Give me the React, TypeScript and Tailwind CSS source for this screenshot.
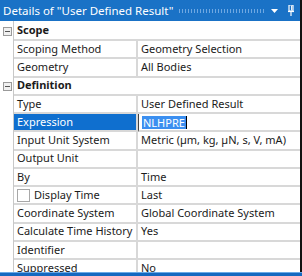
import React from 'react';

type Row =
  | { kind: 'section'; label: string }
  | { kind: 'prop'; label: string; value?: string; selected?: boolean; check?: boolean; editing?: boolean };

const rows: Row[] = [
  { kind: 'section', label: 'Scope' },
  { kind: 'prop', label: 'Scoping Method', value: 'Geometry Selection' },
  { kind: 'prop', label: 'Geometry', value: 'All Bodies' },
  { kind: 'section', label: 'Definition' },
  { kind: 'prop', label: 'Type', value: 'User Defined Result' },
  { kind: 'prop', label: 'Expression', value: 'NLHPRE', selected: true, editing: true },
  { kind: 'prop', label: 'Input Unit System', value: 'Metric (µm, kg, µN, s, V, mA)' },
  { kind: 'prop', label: 'Output Unit', value: '' },
  { kind: 'prop', label: 'By', value: 'Time' },
  { kind: 'prop', label: 'Display Time', value: 'Last', check: true },
  { kind: 'prop', label: 'Coordinate System', value: 'Global Coordinate System' },
  { kind: 'prop', label: 'Calculate Time History', value: 'Yes' },
  { kind: 'prop', label: 'Identifier', value: '' },
  { kind: 'prop', label: 'Suppressed', value: 'No' },
];

function MinusBox() {
  return (
    <div className="w-[9px] h-[9px] border border-[#9a9a9a] bg-[#f0f0f0] flex items-center justify-center">
      <div className="w-[5px] h-px bg-[#555]" />
    </div>
  );
}

export default function App() {
  return (
    <div className="w-[302px] h-[276px] overflow-hidden flex flex-col bg-white font-['Noto_Sans',sans-serif] text-[11px] text-[#1b1b1b]">
      <div className="flex flex-1 min-h-0">
        <div className="flex-1 min-w-0 flex flex-col">
          {/* Title bar */}
          <div className="h-[21px] shrink-0 bg-[#1a72c6] flex items-center pl-[3px] pr-[6px] text-white text-[11.5px]">
            <span className="whitespace-nowrap">Details of "User Defined Result"</span>
            <div className="flex-1 h-[4px] ml-[5px] mr-[2px] bg-[radial-gradient(circle,#6fa8e2_0.7px,transparent_0.9px)] bg-[length:3px_2px]" />
            <svg width="7" height="4" viewBox="0 0 7 4" className="ml-[3px]">
              <path d="M0 0h7L3.5 4z" fill="#fff" />
            </svg>
            <svg width="6" height="11" viewBox="0 0 6 11" className="ml-[10px]">
              <path d="M1 0h4v6H1z" fill="none" stroke="#fff" strokeWidth="1.2" />
              <path d="M0 6.5h6" stroke="#fff" strokeWidth="1.2" />
              <path d="M3 7v4" stroke="#fff" strokeWidth="1.2" />
              <path d="M3.6 0.5v5" stroke="#fff" strokeWidth="1" />
            </svg>
          </div>

          {/* Property grid */}
          <div className="flex flex-col">
            {rows.map((r, i) =>
              r.kind === 'section' ? (
                <div key={i} className={`flex ${i === 0 ? 'h-[20px]' : 'h-[18.25px]'} shrink-0`}>
                  <div className="w-[14px] shrink-0 border-r border-[#c8c8c8] flex items-center justify-center pl-px">
                    <MinusBox />
                  </div>
                  <div className="flex-1 border-b-2 border-[#d8d8d8] flex items-center pl-[3px] font-bold">
                    {r.label}
                  </div>
                </div>
              ) : (
                <div key={i} className="flex h-[18.25px] shrink-0">
                  <div className="w-[14px] shrink-0 border-r border-[#c8c8c8]" />
                  <div
                    className={`w-[124px] shrink-0 border-b-2 border-r-2 border-[#d8d8d8] flex items-center pl-[3px] whitespace-nowrap ${
                      r.selected ? 'bg-[#0f6fcf] text-white' : ''
                    }`}
                  >
                    {r.check && (
                      <div className="w-[13px] h-[13px] border border-[#a8a8a8] bg-white mr-[4px] shrink-0" />
                    )}
                    {r.label}
                  </div>
                  <div
                    className={`flex-1 min-w-0 border-b-2 border-[#d8d8d8] flex items-center pl-[3px] whitespace-nowrap overflow-hidden ${
                      r.editing ? 'border-l border-l-[#444]' : ''
                    }`}
                  >
                    {r.editing ? (
                      <>
                        <span className="bg-[#3b8ff0] text-white px-px leading-[13px]">{r.value}</span>
                        <span className="w-px h-[13px] bg-black" />
                      </>
                    ) : (
                      r.value
                    )}
                  </div>
                </div>
              )
            )}
          </div>
        </div>
        <div className="w-[2px] shrink-0 bg-[#111]" />
      </div>
      <div className="h-[4px] shrink-0 flex flex-col">
        <div className="h-px bg-[#6aa9e6]" />
        <div className="flex-1 bg-[#1468c0]" />
      </div>
    </div>
  );
}
